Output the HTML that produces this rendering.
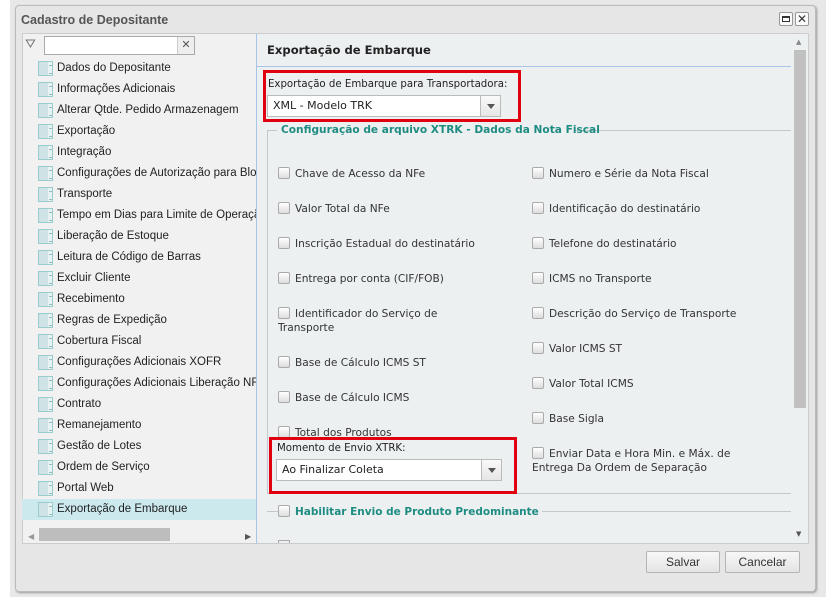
<!DOCTYPE html>
<html><head><meta charset="utf-8"><style>
*{margin:0;padding:0;box-sizing:border-box}
body{width:836px;height:607px;background:#fff;position:relative;overflow:hidden;font-family:"DejaVu Sans",Verdana,sans-serif;font-size:11px;color:#333}
.a{position:absolute}
.tree div{position:absolute;left:0;width:234px;height:21px;font-family:"Liberation Sans",Arial,sans-serif;font-size:11.5px;color:#222;padding-left:35px;line-height:21px;white-space:nowrap;overflow:hidden}
.tree i{position:absolute;left:16px;top:3px;width:15px;height:15px;border:1px solid #9cc;background:linear-gradient(90deg,#cfe3e6 0 9px,#e9f2f3 9px);}
.tree i:after{content:"";position:absolute;left:10px;top:3px;width:3px;height:7px;border-top:1px solid #9bb;border-bottom:1px solid #9bb}
.cb{position:absolute;font-size:10.6px;color:#333;line-height:14px}
.cb b{display:inline-block;width:12px;height:12px;border:1px solid #aaa;border-radius:2px;background:linear-gradient(#fff,#ddd);vertical-align:-2px;margin-right:5px}
.sel{position:absolute;height:22px;border:1px solid #bbb;background:#fff;font-size:11px;line-height:20px;padding-left:5px;color:#222}
.sel span{position:absolute;right:0;top:0;width:20px;height:20px;border-left:1px solid #bbb;background:linear-gradient(#fafafa,#e6e6e6)}
.sel span:after{content:"";position:absolute;left:6px;top:8px;border:4px solid transparent;border-top:5px solid #555}
.red{position:absolute;border:3px solid #e00010}
.btn{position:absolute;height:22px;border:1px solid #b5b5b5;border-radius:2px;background:linear-gradient(#f8f8f8,#e4e4e4);font-family:"Liberation Sans",Arial,sans-serif;font-size:12px;text-align:center;line-height:20px;color:#333}
</style></head><body>
<div class="a" style="left:10px;top:0;width:816px;height:597px;background:#e8e8e8"></div>
<div class="a" style="left:15px;top:5px;width:801px;height:587px;background:#e6e6e6;border:1px solid #bbb;border-radius:4px;box-shadow:1px 1px 2px #999"></div>
<div class="a" style="left:21px;top:13px;font-family:'Liberation Sans',Arial,sans-serif;font-size:12.5px;font-weight:bold;color:#555">Cadastro de Depositante</div>
<div class="a" style="left:779px;top:12px;width:14px;height:14px;border:1px solid #999;border-radius:2px;background:#fafafa"><div class="a" style="left:2px;top:3px;width:8px;height:6px;border:1px solid #333;border-top-width:2px"></div></div>
<div class="a" style="left:795px;top:12px;width:14px;height:14px;border:1px solid #999;border-radius:2px;background:#fafafa;font-size:12px;line-height:12px;text-align:center;color:#333">✕</div>
<!-- left panel -->
<div class="a" style="left:22px;top:33px;width:235px;height:511px;background:#f1f1f1;border:1px solid #ccc"></div>
<div class="a" style="left:25px;top:37px;font-size:13px;color:#777">⛛</div>
<div class="a" style="left:44px;top:36px;width:151px;height:19px;border:1px solid #aaa;background:#fff"></div>
<div class="a" style="left:177px;top:37px;width:17px;height:17px;background:#eee;border-left:1px solid #ccc;text-align:center;line-height:16px;font-weight:bold;color:#555;font-size:11px">✕</div>
<div class="a tree" style="left:22px;top:58px;width:234px;height:462px">
<div style="top:0">Dados do Depositante<i></i></div>
<div style="top:21px">Informações Adicionais<i></i></div>
<div style="top:42px">Alterar Qtde. Pedido Armazenagem<i></i></div>
<div style="top:63px">Exportação<i></i></div>
<div style="top:84px">Integração<i></i></div>
<div style="top:105px">Configurações de Autorização para Bloqueio<i></i></div>
<div style="top:126px">Transporte<i></i></div>
<div style="top:147px">Tempo em Dias para Limite de Operação<i></i></div>
<div style="top:168px">Liberação de Estoque<i></i></div>
<div style="top:189px">Leitura de Código de Barras<i></i></div>
<div style="top:210px">Excluir Cliente<i></i></div>
<div style="top:231px">Recebimento<i></i></div>
<div style="top:252px">Regras de Expedição<i></i></div>
<div style="top:273px">Cobertura Fiscal<i></i></div>
<div style="top:294px">Configurações Adicionais XOFR<i></i></div>
<div style="top:315px">Configurações Adicionais Liberação NF<i></i></div>
<div style="top:336px">Contrato<i></i></div>
<div style="top:357px">Remanejamento<i></i></div>
<div style="top:378px">Gestão de Lotes<i></i></div>
<div style="top:399px">Ordem de Serviço<i></i></div>
<div style="top:420px">Portal Web<i></i></div>
<div style="top:441px;background:#cce9ee">Exportação de Embarque<i></i></div>
</div>
<div class="a" style="left:28px;top:532px;font-size:8px;color:#999">◀</div>
<div class="a" style="left:39px;top:528px;width:131px;height:13px;background:#bdbdbd"></div>
<div class="a" style="left:245px;top:532px;font-size:8px;color:#555">▶</div>
<!-- right panel -->
<div class="a" style="left:256px;top:33px;width:553px;height:511px;background:#ecf0f1;border:1px solid #ccc;border-left:1px solid #a8c4e8"></div>
<div class="a" style="left:267px;top:43px;font-size:11.6px;font-weight:bold;color:#222">Exportação de Embarque</div>
<div class="a" style="left:257px;top:66px;width:534px;height:1px;background:#a8c4e8"></div>
<div class="a" style="left:793px;top:37px;width:14px;height:506px;background:#ecf0f1"></div>
<div class="a" style="left:796px;top:38px;font-size:7px;color:#888">▲</div>
<div class="a" style="left:794px;top:50px;width:12px;height:358px;background:#c0c0c0"></div>
<div class="a" style="left:796px;top:530px;font-size:7px;color:#555">▼</div>
<div class="red" style="left:263px;top:70px;width:258px;height:52px"></div>
<div class="a" style="left:268px;top:79px;font-size:10.2px;color:#222">Exportação de Embarque para Transportadora:</div>
<div class="sel" style="left:267px;top:95px;width:234px">XML - Modelo TRK<span></span></div>
<div class="a" style="left:267px;top:130px;width:524px;height:364px;border:1px solid #c4c8cc;border-top:none;border-right:none"></div>
<div class="a" style="left:267px;top:130px;width:10px;height:1px;background:#c4c8cc"></div>
<div class="a" style="left:574px;top:130px;width:217px;height:1px;background:#c4c8cc"></div>
<div class="a" style="left:281px;top:124px;font-size:10.6px;font-weight:bold;color:#1f8c82">Configuração de arquivo XTRK - Dados da Nota Fiscal</div>
<div class="cb" style="left:278px;top:167px"><b></b>Chave de Acesso da NFe</div>
<div class="cb" style="left:278px;top:202px"><b></b>Valor Total da NFe</div>
<div class="cb" style="left:278px;top:237px"><b></b>Inscrição Estadual do destinatário</div>
<div class="cb" style="left:278px;top:272px"><b></b>Entrega por conta (CIF/FOB)</div>
<div class="cb" style="left:278px;top:307px;width:200px"><b></b>Identificador do Serviço de Transporte</div>
<div class="cb" style="left:278px;top:356px"><b></b>Base de Cálculo ICMS ST</div>
<div class="cb" style="left:278px;top:391px"><b></b>Base de Cálculo ICMS</div>
<div class="cb" style="left:278px;top:426px"><b></b>Total dos Produtos</div>
<div class="cb" style="left:532px;top:167px"><b></b>Numero e Série da Nota Fiscal</div>
<div class="cb" style="left:532px;top:202px"><b></b>Identificação do destinatário</div>
<div class="cb" style="left:532px;top:237px"><b></b>Telefone do destinatário</div>
<div class="cb" style="left:532px;top:272px"><b></b>ICMS no Transporte</div>
<div class="cb" style="left:532px;top:307px"><b></b>Descrição do Serviço de Transporte</div>
<div class="cb" style="left:532px;top:342px"><b></b>Valor ICMS ST</div>
<div class="cb" style="left:532px;top:377px"><b></b>Valor Total ICMS</div>
<div class="cb" style="left:532px;top:412px"><b></b>Base Sigla</div>
<div class="cb" style="left:532px;top:447px;width:240px"><b></b>Enviar Data e Hora Min. e Máx. de Entrega Da Ordem de Separação</div>
<div class="red" style="left:269px;top:437px;width:248px;height:57px;background:#ecf0f1"></div>
<div class="a" style="left:277px;top:443px;font-size:10.2px;color:#222">Momento de Envio XTRK:</div>
<div class="sel" style="left:276px;top:459px;width:226px">Ao Finalizar Coleta<span></span></div>
<div class="a" style="left:267px;top:511px;width:524px;height:1px;background:#c4c8cc"></div>
<div class="cb" style="left:278px;top:505px;background:#ecf0f1;padding-right:3px;font-weight:bold;color:#1f8c82;font-size:10.5px"><b></b>Habilitar Envio de Produto Predominante</div>
<div class="a" style="left:278px;top:540px;width:12px;height:3px;border:1px solid #aaa;border-bottom:none"></div>
<div class="btn" style="left:646px;top:551px;width:74px">Salvar</div>
<div class="btn" style="left:725px;top:551px;width:75px">Cancelar</div>
</body></html>
